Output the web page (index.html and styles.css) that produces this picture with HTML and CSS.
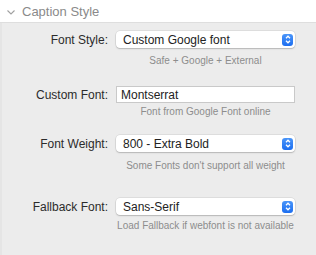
FILE: index.html
```html
<!DOCTYPE html>
<html lang="en">
<head>
  <meta charset="UTF-8" />
  <meta name="viewport" content="width=device-width, initial-scale=1.0"/>
  <title>Caption Style</title>
  <link rel="stylesheet" href="styles.css">
</head>
<body>
  <div class="panel">
    <!-- Section header -->
    <div class="panel-header">
      <svg class="chevron" width="8" height="5" viewBox="0 0 8 5">
        <path d="M0.5 0.5 L4 4 L7.5 0.5" fill="none" stroke="#a0a0a0" stroke-width="1.1"/>
      </svg>
      <span>Caption Style</span>
    </div>

    <div class="panel-body">
      <div class="field field-style">
        <label class="field-label">Font Style:</label>
        <div class="select">
          <span>Custom Google font</span>
          <span class="stepper">
            <svg width="6" height="9" viewBox="0 0 6 9">
              <path d="M1 3.2 L3 1.2 L5 3.2 M1 5.8 L3 7.8 L5 5.8" fill="none" stroke="#fff" stroke-width="1.3"/>
            </svg>
          </span>
        </div>
        <div class="hint">Safe + Google + External</div>
      </div>

      <div class="field field-custom">
        <label class="field-label">Custom Font:</label>
        <input class="text-input" type="text" value="Montserrat">
        <div class="hint">Font from Google Font online</div>
      </div>

      <div class="field field-weight">
        <label class="field-label">Font Weight:</label>
        <div class="select">
          <span>800 - Extra Bold</span>
          <span class="stepper">
            <svg width="6" height="9" viewBox="0 0 6 9">
              <path d="M1 3.2 L3 1.2 L5 3.2 M1 5.8 L3 7.8 L5 5.8" fill="none" stroke="#fff" stroke-width="1.3"/>
            </svg>
          </span>
        </div>
        <div class="hint">Some Fonts don't support all weight</div>
      </div>

      <div class="field field-fallback">
        <label class="field-label">Fallback Font:</label>
        <div class="select">
          <span>Sans-Serif</span>
          <span class="stepper">
            <svg width="6" height="9" viewBox="0 0 6 9">
              <path d="M1 3.2 L3 1.2 L5 3.2 M1 5.8 L3 7.8 L5 5.8" fill="none" stroke="#fff" stroke-width="1.3"/>
            </svg>
          </span>
        </div>
        <div class="hint">Load Fallback if webfont is not available</div>
      </div>
    </div>
  </div>
</body>
</html>
```

FILE: styles.css
```css
html,
body {
  background: #ececec;
}

body {
  margin: 0;
  padding: 0;
  font-family: 'Liberation Sans', Helvetica, Arial, sans-serif;
  color: #262626;
}

.panel {
  width: 316px;
  height: 255px;
  overflow: hidden;
  display: flex;
  flex-direction: column;
}

.panel-header {
  flex: 0 0 22px;
  background: #fff;
  border-bottom: 1px solid #dedede;
  display: flex;
  align-items: center;
  padding-left: 7px;
  font-size: 13px;
  color: #8a8a8a;
}

.chevron {
  margin-right: 7px;
  margin-top: 2px;
}

.panel-body {
  flex: 1;
  padding-top: 8px;
  background: #ececec;
  border-left: 2px solid #e5e5e5;
}

.field {
  display: grid;
  grid-template-columns: 106px 179px;
  column-gap: 8px;
  align-items: center;
}

.field-label {
  text-align: right;
  font-size: 12px;
  color: #2b2b2b;
}

.select {
  height: 17px;
  background: #fff;
  border-radius: 4px;
  box-shadow: 0 0 0 0.5px rgba(0, 0, 0, 0.12), 0 1px 1.5px rgba(0, 0, 0, 0.18);
  display: flex;
  align-items: center;
  justify-content: space-between;
  padding: 0 2px 0 7px;
  font-size: 12px;
  color: #222;
}

.stepper {
  width: 11px;
  height: 12px;
  border-radius: 3px;
  background: linear-gradient(#4a95f9, #1c6ef0);
  display: flex;
  align-items: center;
  justify-content: center;
}

.text-input {
  box-sizing: border-box;
  height: 17px;
  margin: 0;
  border: 1px solid #c9c9c9;
  border-radius: 0;
  background: #fff;
  padding: 0 4px;
  font-family: inherit;
  font-size: 12px;
  color: #222;
  outline: none;
}

.hint {
  grid-column: 2;
  text-align: center;
  font-size: 10px;
  line-height: 12px;
  color: #8d8d8d;
}

.field-style .hint {
  margin-top: 7px;
}

.field-custom {
  margin-top: 19px;
}

.field-custom .hint {
  margin-top: 3px;
}

.field-weight {
  margin-top: 17px;
}

.field-weight .hint {
  margin-top: 8px;
}

.field-fallback {
  margin-top: 26px;
}

.field-fallback .hint {
  margin-top: 5px;
}
```
